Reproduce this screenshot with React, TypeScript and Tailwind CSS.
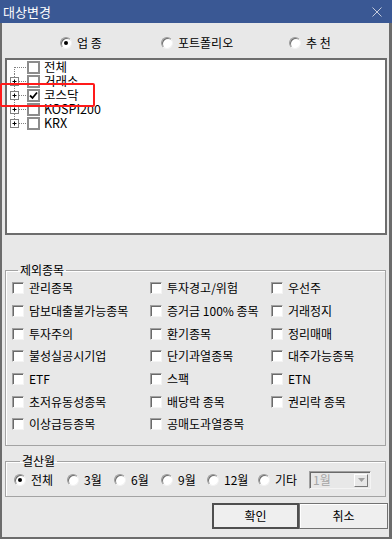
import React from 'react';

const font = { fontFamily: '"Noto Sans CJK KR", "Noto Sans", sans-serif' };

function Radio({ checked = false }: { checked?: boolean }) {
  return (
    <span className="relative w-[12px] h-[12px] shrink-0 rounded-full bg-white border border-t-[#9a9a9a] border-l-[#9a9a9a] border-r-[#f2f2f2] border-b-[#f2f2f2] shadow-[inset_1px_1px_0_#6e6e6e] flex items-center justify-center">
      {checked && <span className="w-[4px] h-[4px] rounded-full bg-black" />}
    </span>
  );
}

function Check() {
  return (
    <span className="w-[12px] h-[12px] shrink-0 bg-white border border-t-[#a0a0a0] border-l-[#a0a0a0] border-r-[#f4f4f4] border-b-[#f4f4f4] shadow-[inset_1px_1px_0_#6a6a6a]" />
  );
}

function TreeCheck({ checked = false }: { checked?: boolean }) {
  return (
    <span className="w-[13px] h-[13px] shrink-0 bg-white border-2 border-[#8c8c8c] flex items-center justify-center">
      {checked && (
        <svg width="9" height="9" viewBox="0 0 9 9">
          <path d="M1 4.5 L3.5 7 L8 1.5" stroke="#000" strokeWidth="1.8" fill="none" />
        </svg>
      )}
    </span>
  );
}

// connector drawing for tree rows: kind = first | mid | last
function Connector({ kind, expander }: { kind: 'first' | 'mid' | 'last'; expander: boolean }) {
  const y1 = kind === 'first' ? 7 : 0;
  const y2 = kind === 'last' ? 7 : 14;
  return (
    <svg width="20" height="14" viewBox="0 0 20 14" className="shrink-0">
      <line x1="7.5" y1={y1} x2="7.5" y2={y2} stroke="#808080" strokeWidth="1" strokeDasharray="1 1" />
      <line x1={expander ? 12 : 8} y1="7.5" x2="20" y2="7.5" stroke="#808080" strokeWidth="1" strokeDasharray="1 1" />
      {expander && (
        <>
          <rect x="3.5" y="3.5" width="8" height="8" fill="#fff" stroke="#808080" strokeWidth="1" />
          <line x1="5.5" y1="7.5" x2="9.5" y2="7.5" stroke="#000" strokeWidth="1" />
          <line x1="7.5" y1="5.5" x2="7.5" y2="9.5" stroke="#000" strokeWidth="1" />
        </>
      )}
    </svg>
  );
}

const treeItems = [
  { label: '전체', kind: 'first' as const, expander: false, checked: false },
  { label: '거래소', kind: 'mid' as const, expander: true, checked: false },
  { label: '코스닥', kind: 'mid' as const, expander: true, checked: true },
  { label: 'KOSPI200', kind: 'mid' as const, expander: true, checked: false },
  { label: 'KRX', kind: 'last' as const, expander: true, checked: false },
];

const excludeRows: (string | null)[][] = [
  ['관리종목', '투자경고/위험', '우선주'],
  ['담보대출불가능종목', '증거금 100% 종목', '거래정지'],
  ['투자주의', '환기종목', '정리매매'],
  ['불성실공시기업', '단기과열종목', '대주가능종목'],
  ['ETF', '스팩', 'ETN'],
  ['초저유동성종목', '배당락 종목', '권리락 종목'],
  ['이상급등종목', '공매도과열종목', null],
];

const months = [
  { label: '전체', w: 'w-[53px]', checked: true },
  { label: '3월', w: 'w-[47px]', checked: false },
  { label: '6월', w: 'w-[47px]', checked: false },
  { label: '9월', w: 'w-[46px]', checked: false },
  { label: '12월', w: 'w-[51px]', checked: false },
  { label: '기타', w: 'w-[51px]', checked: false },
];

export default function App() {
  return (
    <div className="relative w-[392px] h-[539px] flex flex-col bg-[#e8e8e8] text-[12px] text-black overflow-hidden" style={font}>
      {/* title bar */}
      <div className="h-[23px] shrink-0 bg-[#3a5894] flex items-center justify-between pl-[3px] pr-[10px]">
        <span className="text-white text-[13px] leading-none">대상변경</span>
        <svg width="10" height="10" viewBox="0 0 10 10">
          <path d="M0.5 0.5 L9.5 9.5 M9.5 0.5 L0.5 9.5" stroke="#c3cadb" strokeWidth="1" />
        </svg>
      </div>

      <div className="flex-1 flex flex-col border-l-2 border-r-[3px] border-b-2 border-[#6c6c6c]">
        {/* type radios */}
        <div className="h-[35px] pt-[5px] flex items-center pl-[58px] leading-none">
          <label className="w-[101px] flex items-center gap-[5px]">
            <Radio checked />
            <span>업 종</span>
          </label>
          <label className="w-[128px] flex items-center gap-[5px]">
            <Radio />
            <span>포트폴리오</span>
          </label>
          <label className="flex items-center gap-[5px]">
            <Radio />
            <span>추 천</span>
          </label>
        </div>

        {/* tree */}
        <div className="ml-[3px] mr-[2px] h-[177px] bg-white border-2 border-[#6d6d6d] flex flex-col">
          {treeItems.map(item => (
            <div key={item.label} className="h-[14px] flex items-center leading-none">
              <Connector kind={item.kind} expander={item.expander} />
              <TreeCheck checked={item.checked} />
              <span className="ml-[4px] text-[12.5px]">{item.label}</span>
            </div>
          ))}
        </div>

        {/* excluded */}
        <fieldset className="mt-[28px] ml-[3px] mr-[3px] border border-[#a3a3a3] shadow-[inset_1px_1px_0_#fff] pl-[6px] pb-[9px] pt-0 h-[183px]">
          <legend className="ml-[6px] px-[2px] leading-[14px]">제외종목</legend>
          <div className="grid grid-cols-[138px_121px_1fr]">
            {excludeRows.map((row, ri) =>
              row.map((label, ci) => (
                <div key={`${ri}-${ci}`} className="h-[22.7px] flex items-center gap-[5px] leading-none whitespace-nowrap">
                  {label && (
                    <>
                      <Check />
                      <span>{label}</span>
                    </>
                  )}
                </div>
              ))
            )}
          </div>
        </fieldset>

        {/* settlement month */}
        <fieldset className="mt-[8px] ml-[3px] mr-[3px] border border-[#a3a3a3] shadow-[inset_1px_1px_0_#fff] pl-[8px] pb-[4px] pt-0">
          <legend className="ml-[6px] px-[2px] leading-[14px]">결산월</legend>
          <div className="h-[24px] flex items-center leading-none">
            {months.map(m => (
              <label key={m.label} className={`${m.w} flex items-center gap-[5px]`}>
                <Radio checked={m.checked} />
                <span>{m.label}</span>
              </label>
            ))}
            <div className="w-[62px] h-[18px] flex items-center justify-between bg-[#e8e8e8] border border-t-[#a0a0a0] border-l-[#a0a0a0] border-r-[#f4f4f4] border-b-[#f4f4f4] shadow-[inset_1px_1px_0_#6a6a6a] pl-[3px] pr-[2px]">
              <span className="text-[#a6a6a6]">1월</span>
              <span className="w-[14px] h-[13px] bg-[#e8e8e8] border border-t-[#fff] border-l-[#fff] border-r-[#7a7a7a] border-b-[#7a7a7a] flex items-center justify-center">
                <svg width="7" height="4" viewBox="0 0 7 4">
                  <path d="M0 0 L7 0 L3.5 4 Z" fill="#a0a0a0" />
                </svg>
              </span>
            </div>
          </div>
        </fieldset>

        {/* buttons */}
        <div className="mt-[6px] flex justify-end pr-[1px]">
          <button className="w-[87px] h-[26px] bg-[#efefef] border-2 border-[#4f4f4f] leading-none">확인</button>
          <button className="w-[89px] h-[26px] bg-[#efefef] border border-[#727272] shadow-[inset_1px_1px_0_#fff] leading-none">취소</button>
        </div>
      </div>

      {/* highlight annotation */}
      <div className="absolute left-0 top-[83px] w-[95px] h-[24px] border-2 border-[#ff1a1a] rounded-[2px] pointer-events-none" />
    </div>
  );
}
